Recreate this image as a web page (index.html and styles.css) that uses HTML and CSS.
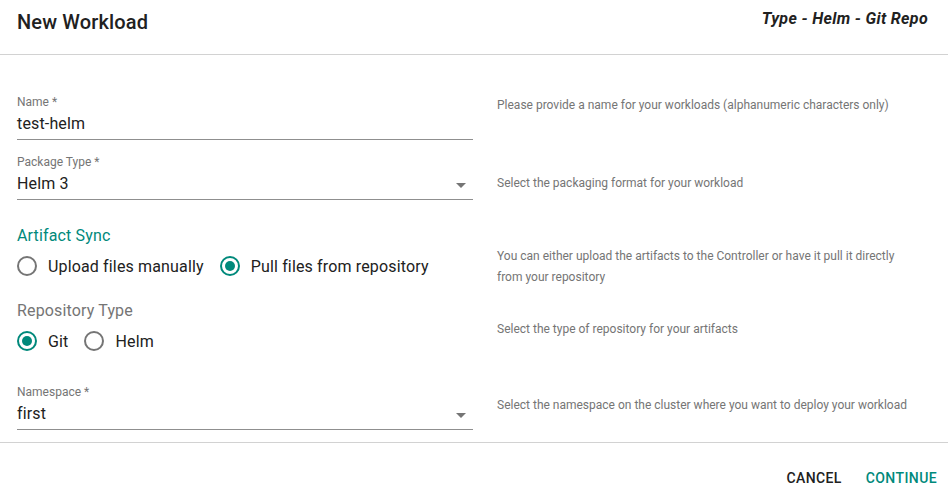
FILE: index.html
```html
<!DOCTYPE html>
<html lang="en">
<head>
<meta charset="utf-8">
<title>New Workload</title>
<link rel="stylesheet" href="styles.css">
</head>
<body>
<div class="dialog">
  <header class="header">
    <h1 class="title">New Workload</h1>
    <div class="subtitle">Type - Helm - Git Repo</div>
  </header>

  <main class="content">
    <section class="row row-name">
      <div class="field">
        <label class="field-label">Name *</label>
        <div class="field-input"><span class="field-value">test-helm</span></div>
      </div>
      <p class="help help-name">Please provide a name for your workloads (alphanumeric characters only)</p>
    </section>

    <section class="row row-package">
      <div class="field">
        <label class="field-label">Package Type *</label>
        <div class="field-input">
          <span class="field-value">Helm 3</span>
          <svg class="arrow" viewBox="0 0 24 24" width="24" height="24"><path d="M7 10l5 5 5-5z"/></svg>
        </div>
      </div>
      <p class="help help-package">Select the packaging format for your workload</p>
    </section>

    <section class="row row-sync">
      <div class="group">
        <div class="group-title accent">Artifact Sync</div>
        <div class="radios">
          <div class="radio">
            <svg class="radio-icon" viewBox="0 0 24 24" width="24" height="24"><circle cx="12" cy="12" r="9" fill="none" stroke="#757575" stroke-width="2"/></svg>
            <span class="radio-label">Upload files manually</span>
          </div>
          <div class="radio">
            <svg class="radio-icon" viewBox="0 0 24 24" width="24" height="24"><circle cx="12" cy="12" r="9" fill="none" stroke="#00897b" stroke-width="2"/><circle cx="12" cy="12" r="5" fill="#00897b"/></svg>
            <span class="radio-label">Pull files from repository</span>
          </div>
        </div>
      </div>
      <p class="help help-sync">You can either upload the artifacts to the Controller or have it pull it directly from your repository</p>
    </section>

    <section class="row row-repo">
      <div class="group">
        <div class="group-title muted">Repository Type</div>
        <div class="radios">
          <div class="radio">
            <svg class="radio-icon" viewBox="0 0 24 24" width="24" height="24"><circle cx="12" cy="12" r="9" fill="none" stroke="#00897b" stroke-width="2"/><circle cx="12" cy="12" r="5" fill="#00897b"/></svg>
            <span class="radio-label">Git</span>
          </div>
          <div class="radio">
            <svg class="radio-icon" viewBox="0 0 24 24" width="24" height="24"><circle cx="12" cy="12" r="9" fill="none" stroke="#757575" stroke-width="2"/></svg>
            <span class="radio-label">Helm</span>
          </div>
        </div>
      </div>
      <p class="help help-repo">Select the type of repository for your artifacts</p>
    </section>

    <section class="row row-ns">
      <div class="field">
        <label class="field-label">Namespace *</label>
        <div class="field-input">
          <span class="field-value">first</span>
          <svg class="arrow" viewBox="0 0 24 24" width="24" height="24"><path d="M7 10l5 5 5-5z"/></svg>
        </div>
      </div>
      <p class="help help-ns">Select the namespace on the cluster where you want to deploy your workload</p>
    </section>
  </main>

  <footer class="footer">
    <button class="btn btn-cancel">Cancel</button>
    <button class="btn btn-continue">Continue</button>
  </footer>
</div>
</body>
</html>
```

FILE: styles.css
```css
* { box-sizing: border-box; }

html, body {
  margin: 0;
  padding: 0;
  background: #ffffff;
}

body {
  font-family: Roboto, "Noto Sans", "Liberation Sans", sans-serif;
  color: #212121;
  width: 948px;
  height: 495px;
  overflow: hidden;
}

.dialog {
  display: flex;
  flex-direction: column;
}

.header {
  display: flex;
  justify-content: space-between;
  align-items: flex-start;
  height: 55px;
  padding: 10px 20px 0 17px;
  border-bottom: 1px solid #d2d2d2;
}

.title {
  margin: 0;
  font-size: 20px;
  font-weight: 500;
  line-height: 25px;
  letter-spacing: 0.15px;
  color: #212121;
}

.subtitle {
  font-size: 16px;
  font-style: italic;
  font-weight: 700;
  line-height: 17px;
  letter-spacing: 0.35px;
  color: #212121;
}

.content {
  display: flex;
  flex-direction: column;
  padding: 40px 0 12px 17px;
  border-bottom: 1px solid #d2d2d2;
}

.row {
  display: grid;
  grid-template-columns: 456px 1fr;
  column-gap: 24px;
  align-items: start;
}

.row-package { margin-top: 15px; }
.row-sync { margin-top: 26px; }
.row-repo { margin-top: 13px; }
.row-ns { margin-top: 23px; }

.field {
  display: flex;
  flex-direction: column;
}

.field-label {
  font-size: 12px;
  line-height: 14px;
  color: #757575;
}

.field-input {
  display: flex;
  align-items: flex-start;
  margin-top: 5px;
  padding-bottom: 6px;
  border-bottom: 1px solid #8f8f8f;
}

.field-value {
  flex: 1;
  font-size: 16px;
  line-height: 19px;
  letter-spacing: 0.15px;
  color: #212121;
  height: 19px;
}

.arrow {
  fill: #757575;
  margin-top: -1px;
  margin-bottom: -4px;
}

.help {
  margin: 0;
  font-size: 12px;
  line-height: 21px;
  color: #757575;
  padding-right: 40px;
}

.help-name { margin-top: 0; }
.help-package { margin-top: 18px; }
.help-sync { margin-top: 20px; }
.help-repo { margin-top: 18px; }
.help-ns { margin-top: 10px; }

.group {
  display: flex;
  flex-direction: column;
}

.group-title {
  font-size: 16px;
  line-height: 19px;
  letter-spacing: 0.15px;
}

.accent { color: #00897b; }
.muted { color: #757575; }

.radios {
  display: flex;
  align-items: center;
  gap: 16px;
  height: 42px;
}

.radio {
  display: flex;
  align-items: center;
  gap: 9px;
}

.radio-icon {
  margin-left: -2px;
  flex: none;
}

.radio-label {
  font-size: 16px;
  line-height: 19px;
  letter-spacing: 0.15px;
  color: #212121;
}

.footer {
  display: flex;
  justify-content: flex-end;
  gap: 24px;
  padding: 27px 11px 0 0;
}

.btn {
  background: none;
  border: 0;
  padding: 0;
  font-family: Roboto, "Noto Sans", "Liberation Sans", sans-serif;
  font-size: 14px;
  font-weight: 500;
  line-height: 16px;
  letter-spacing: 0.4px;
  text-transform: uppercase;
  cursor: pointer;
}

.btn-cancel { color: #212121; }
.btn-continue { color: #00897b; }
```
